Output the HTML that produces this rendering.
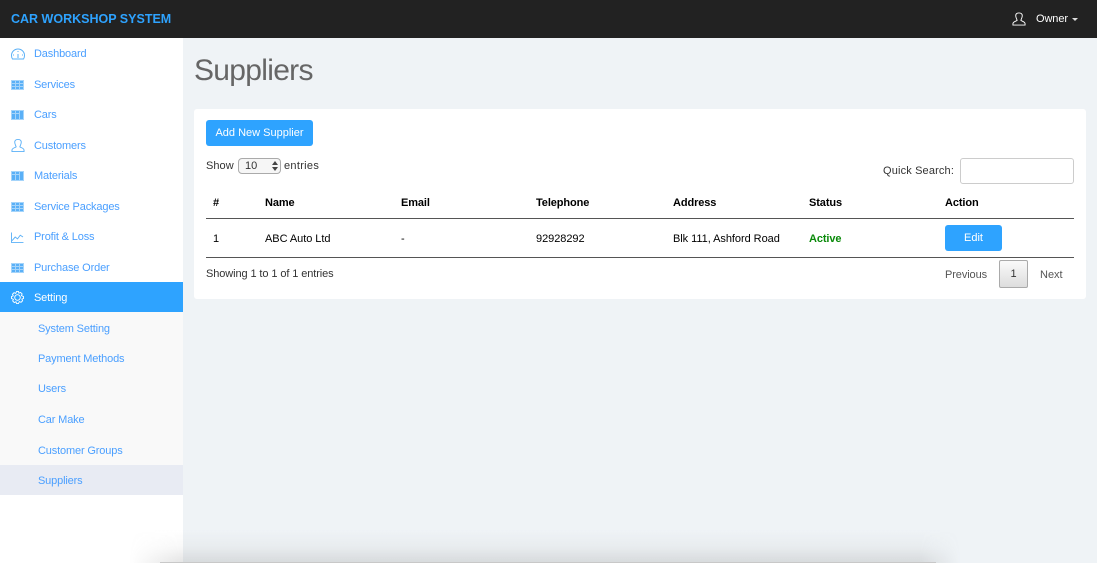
<!DOCTYPE html>
<html><head><meta charset="utf-8"><style>
*{box-sizing:border-box}
html,body{margin:0;padding:0;width:1097px;height:563px;overflow:hidden;background:#eff3f6;font-family:"Liberation Sans",sans-serif;font-size:11px;color:#333}
.a{position:absolute;white-space:nowrap}
.hdr{left:0;top:0;width:1097px;height:38px;background:#222}
.side{left:0;top:38px;width:183px;height:525px;background:#fff}
.sub{left:0;top:312px;width:183px;height:153px;background:#f9f9f9}
.set{left:0;top:282px;width:183px;height:30px;background:#2ea3ff}
.cur{left:0;top:465px;width:183px;height:30px;background:#e8ebf3}
.m{left:34px;color:#4a9fff;line-height:14px;letter-spacing:-.15px;margin-top:1px}
.s{left:38px;color:#4a9fff;line-height:14px;letter-spacing:-.15px;margin-top:1px}
svg{position:absolute;fill:none;stroke:#5ab0f7;stroke-width:1}
svg.t{stroke:#a5d4fa;fill:#5ab0f7}
.card{left:194px;top:109px;width:892px;height:190px;background:#fff;border-radius:3px}
.th{top:196px;font-weight:bold;color:#000;line-height:14px;letter-spacing:-.1px}
.td{top:232px;color:#000;line-height:14px;letter-spacing:-.05px}
.line{left:206px;width:868px;height:1px;background:#555}
</style></head><body>
<div class="a hdr"></div>
<div class="a" style="left:11px;top:11px;font-size:12.5px;line-height:16px;font-weight:bold;color:#2ea3ff">CAR WORKSHOP SYSTEM</div>
<svg style="left:1012px;top:12px;stroke:#fff" width="14" height="14" viewBox="0 0 15 14"><path d="M5.500 8.500C5 6.500 4 5.500 4 3.500C4 1.500 5.500.5 7.500.5S11 1.500 11 3.500C11 5.500 10 6.500 9.500 8.500C11 9.500 14 10 14 12V13.500H1V12C1 10 4 9.500 5.500 8.500Z"/></svg>
<div class="a" style="left:1036px;top:12px;color:#fff;line-height:14px;letter-spacing:-.1px">Owner</div>
<div class="a" style="left:1072px;top:18px;width:0;height:0;border-left:3px solid transparent;border-right:3px solid transparent;border-top:3px solid #ddd"></div>

<div class="a side"></div><div class="a sub"></div><div class="a set"></div><div class="a cur"></div>

<svg style="left:11px;top:48px" width="14" height="12" viewBox="0 0 14 12"><path d="M1.500 11C.8 10 .5 8.800.5 7.500A6.500 6.500 0 0 1 13.500 7.500C13.500 8.800 13.200 10 12.500 11ZM7 3V4M7 6V10M3 7H2M12 7H11"/></svg>
<svg class="t" style="left:11px;top:80px" width="13" height="10" viewBox="0 0 13 10"><path d="M.5.500H12.500V9.500H.5ZM.5 3.500H12.500M.5 6.500H12.500M4.500.5V9.500M8.500.5V9.500"/></svg>
<svg class="t" style="left:11px;top:110px" width="13" height="10" viewBox="0 0 13 10"><path d="M.5.500H12.500V9.500H.5ZM.5 3.500H8M4.500.5V9.500M8.500.5V9.500"/></svg>
<svg style="left:11px;top:139px" width="14" height="13" viewBox="0 0 15 14"><path d="M5.500 8.500C5 6.500 4 5.500 4 3.500C4 1.500 5.500.5 7.500.5S11 1.500 11 3.500C11 5.500 10 6.500 9.500 8.500C11 9.500 14 10 14 12V13.500H1V12C1 10 4 9.500 5.500 8.500Z"/></svg>
<svg class="t" style="left:11px;top:171px" width="13" height="10" viewBox="0 0 13 10"><path d="M.5.500H12.500V9.500H.5ZM.5 3.500H8M4.500.5V9.500M8.500.5V9.500"/></svg>
<svg class="t" style="left:11px;top:202px" width="13" height="10" viewBox="0 0 13 10"><path d="M.5.500H12.500V9.500H.5ZM.5 3.500H12.500M.5 6.500H12.500M4.500.5V9.500M8.500.5V9.500"/></svg>
<svg style="left:11px;top:232px" width="13" height="11" viewBox="0 0 14 12"><path d="M.5.500V11.500H13.500M1 9.500L4.500 5.500L7 7.500L10 3.500L13 5.500"/></svg>
<svg class="t" style="left:11px;top:263px" width="13" height="10" viewBox="0 0 13 10"><path d="M.5.500H12.500V9.500H.5ZM.5 3.500H12.500M.5 6.500H12.500M4.500.5V9.500M8.500.5V9.500"/></svg>
<svg style="left:11px;top:291px;stroke:#fff" width="13" height="13" viewBox="0 0 14 14"><circle cx="7" cy="7" r="3"/><path d="M6 .5H8L8.500 2.300L10.300 1.500L12 3.200L11.200 5L13.500 6V8L11.700 8.700L12.500 10.500L10.800 12.200L9 11.400L8 13.500H6L5.300 11.600L3.500 12.400L1.800 10.700L2.600 9L.5 8V6L2.400 5.300L1.600 3.500L3.300 1.800L5.100 2.600Z"/></svg>

<div class="a m" style="top:46px">Dashboard</div>
<div class="a m" style="top:77px">Services</div>
<div class="a m" style="top:107px">Cars</div>
<div class="a m" style="top:138px">Customers</div>
<div class="a m" style="top:168px">Materials</div>
<div class="a m" style="top:199px">Service Packages</div>
<div class="a m" style="top:229px">Profit &amp; Loss</div>
<div class="a m" style="top:260px">Purchase Order</div>
<div class="a m" style="top:290px;color:#fff">Setting</div>
<div class="a s" style="top:321px">System Setting</div>
<div class="a s" style="top:351px">Payment Methods</div>
<div class="a s" style="top:381px">Users</div>
<div class="a s" style="top:412px">Car Make</div>
<div class="a s" style="top:443px">Customer Groups</div>
<div class="a s" style="top:473px">Suppliers</div>

<div class="a" style="left:194px;top:52px;font-size:30px;line-height:38px;color:#666;letter-spacing:-.7px">Suppliers</div>
<div class="a card"></div>
<div class="a" style="left:206px;top:120px;width:107px;height:26px;background:#2ea3ff;border-radius:3px;color:#fff;text-align:center;line-height:27px">Add New Supplier</div>
<div class="a" style="left:206px;top:159px;line-height:14px;letter-spacing:.05px">Show</div>
<div class="a" style="left:238px;top:158px;width:43px;height:16px;border:1px solid #aaa;border-radius:4px;background:#f6f6f6;line-height:14px;padding-left:6px">10</div>
<div class="a" style="left:272px;top:161px;width:0;height:0;border-left:3px solid transparent;border-right:3px solid transparent;border-bottom:4px solid #444"></div>
<div class="a" style="left:272px;top:167px;width:0;height:0;border-left:3px solid transparent;border-right:3px solid transparent;border-top:4px solid #444"></div>
<div class="a" style="left:284px;top:159px;line-height:14px;letter-spacing:.3px">entries</div>
<div class="a" style="left:883px;top:164px;line-height:14px;letter-spacing:.15px">Quick Search:</div>
<div class="a" style="left:960px;top:158px;width:114px;height:26px;border:1px solid #ccc;border-radius:3px;background:#fff"></div>

<div class="a th" style="left:213px">#</div>
<div class="a th" style="left:265px">Name</div>
<div class="a th" style="left:401px">Email</div>
<div class="a th" style="left:536px">Telephone</div>
<div class="a th" style="left:673px">Address</div>
<div class="a th" style="left:809px">Status</div>
<div class="a th" style="left:945px">Action</div>
<div class="a line" style="top:218px"></div>
<div class="a td" style="left:213px">1</div>
<div class="a td" style="left:265px">ABC Auto Ltd</div>
<div class="a td" style="left:401px">-</div>
<div class="a td" style="left:536px">92928292</div>
<div class="a td" style="left:673px">Blk 111, Ashford Road</div>
<div class="a td" style="left:809px;color:#0a8a0a;font-weight:bold;letter-spacing:-.1px">Active</div>
<div class="a" style="left:945px;top:225px;width:57px;height:26px;background:#2ea3ff;border-radius:3px;color:#fff;text-align:center;line-height:27px">Edit</div>
<div class="a line" style="top:257px"></div>
<div class="a" style="left:206px;top:267px;line-height:14px;letter-spacing:-.1px">Showing 1 to 1 of 1 entries</div>
<div class="a" style="left:945px;top:268px;line-height:14px;color:#555;letter-spacing:-.1px">Previous</div>
<div class="a" style="left:999px;top:260px;width:29px;height:28px;border:1px solid #aaa;border-radius:2px;background:linear-gradient(#fafafa,#ddd);text-align:center;line-height:27px">1</div>
<div class="a" style="left:1040px;top:268px;line-height:14px;color:#555">Next</div>

<div class="a" style="left:130px;top:530px;width:830px;height:33px;background:linear-gradient(rgba(120,120,120,0),rgba(120,120,120,.05) 50%,rgba(120,120,120,.2));-webkit-mask-image:linear-gradient(90deg,transparent,#000 50px,#000 790px,transparent)"></div>
<div class="a" style="left:160px;top:562px;width:776px;height:1px;background:#c8c8c8"></div>
</body></html>
